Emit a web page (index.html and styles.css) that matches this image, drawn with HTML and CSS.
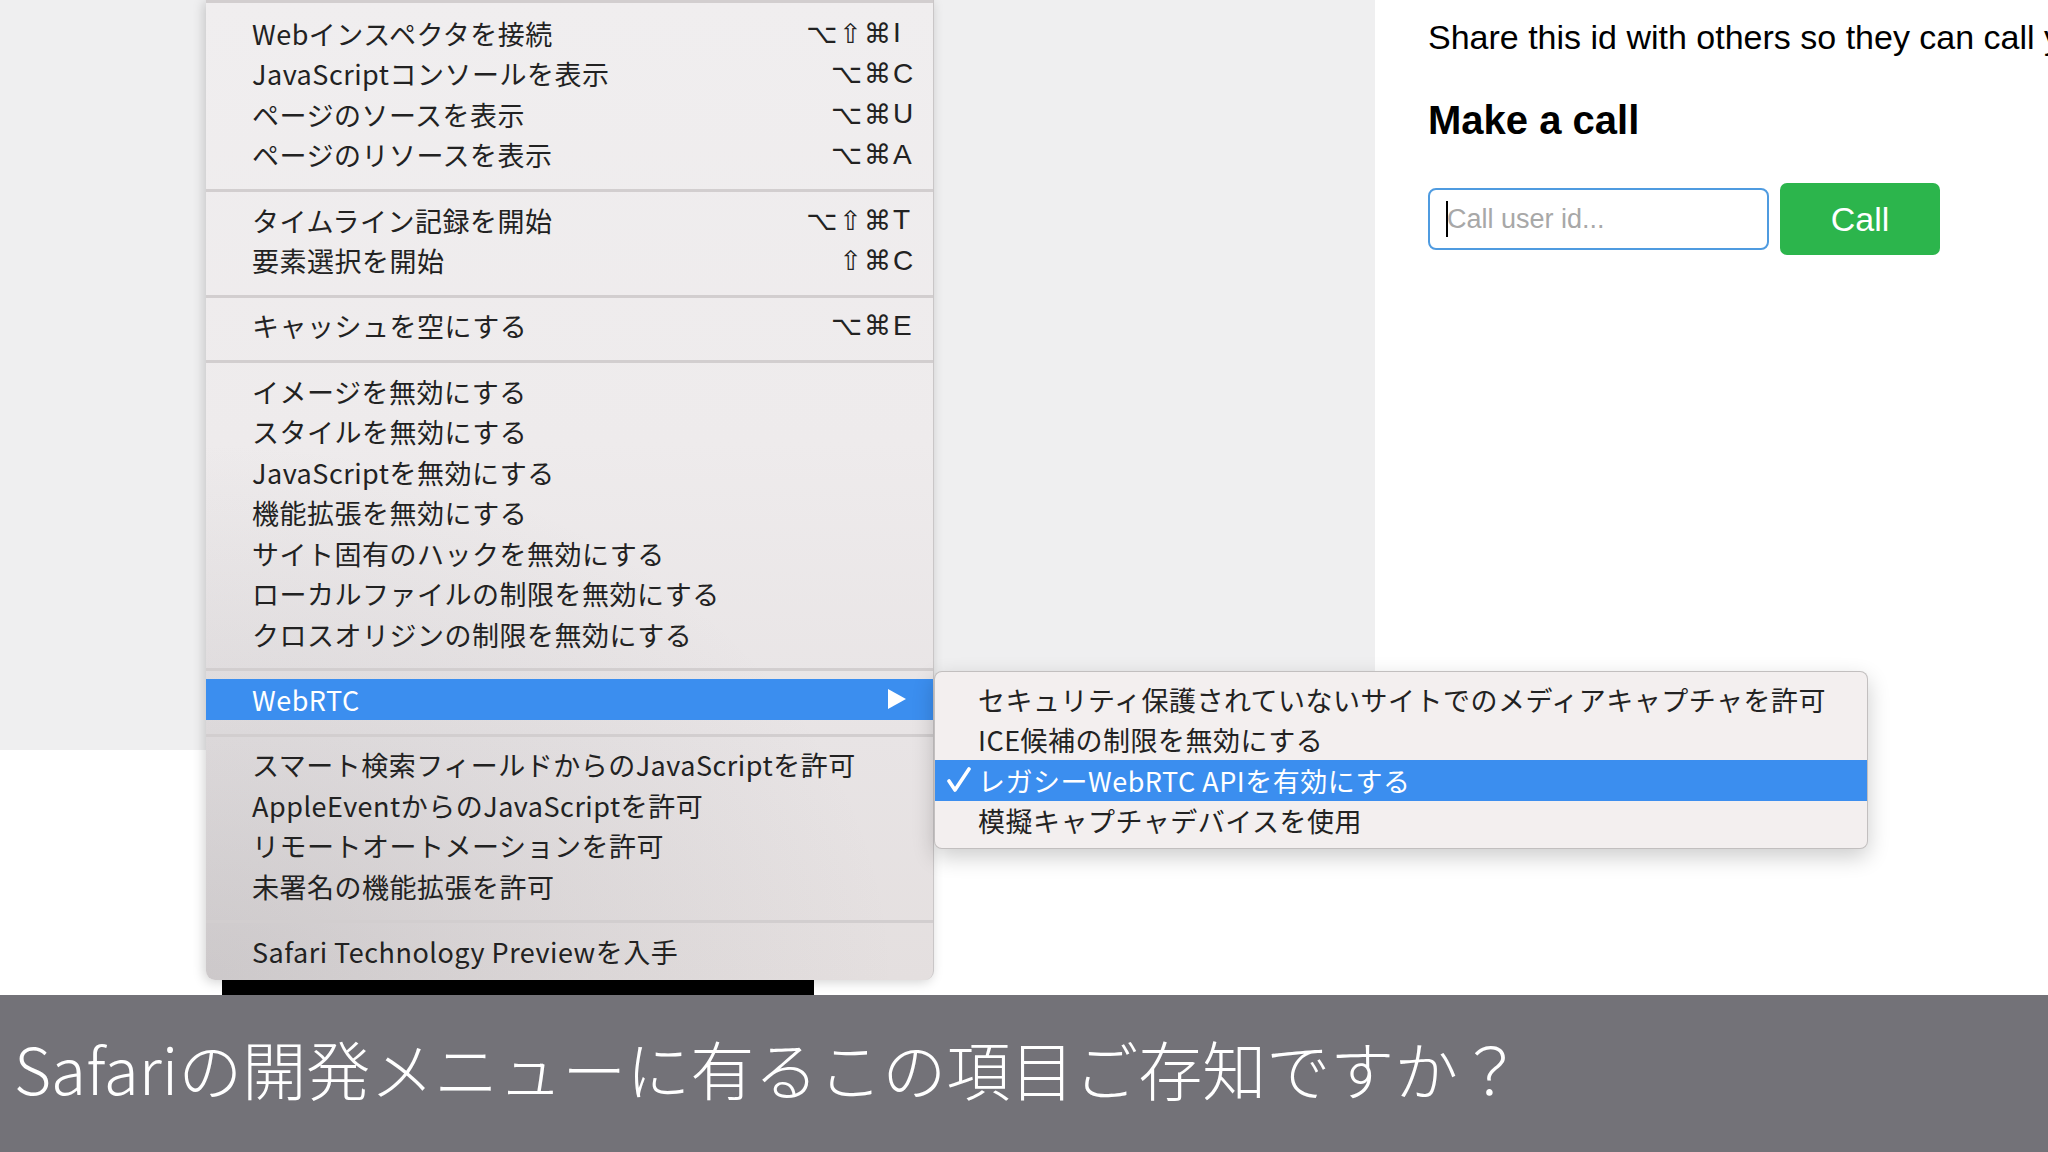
FILE: index.html
```html
<!DOCTYPE html>
<html lang="ja">
<head>
<meta charset="utf-8">
<title>Safari 開発メニュー</title>
<link rel="stylesheet" href="styles.css">
</head>
<body>
<div class="screen">
  <div class="desktop">
    <div class="left-pane"></div>
    <div class="web">
      <p class="share">Share this id with others so they can call you.</p>
      <h2 class="title">Make a call</h2>
      <div class="call-row">
        <div class="field"><span class="caret"></span><span class="ph">Call user id...</span></div>
        <button class="call-btn">Call</button>
      </div>
    </div>

    <div class="dock-bar"></div>

    <div class="menu">
      <div class="sep first"></div>
      <div class="item"><span class="label">Webインスペクタを接続</span><span class="sc"><span class="mods">⌥⇧⌘</span><span class="key">I</span></span></div>
      <div class="item"><span class="label">JavaScriptコンソールを表示</span><span class="sc"><span class="mods">⌥⌘</span><span class="key">C</span></span></div>
      <div class="item"><span class="label">ページのソースを表示</span><span class="sc"><span class="mods">⌥⌘</span><span class="key">U</span></span></div>
      <div class="item"><span class="label">ページのリソースを表示</span><span class="sc"><span class="mods">⌥⌘</span><span class="key">A</span></span></div>
      <div class="sep"></div>
      <div class="item"><span class="label">タイムライン記録を開始</span><span class="sc"><span class="mods">⌥⇧⌘</span><span class="key">T</span></span></div>
      <div class="item"><span class="label">要素選択を開始</span><span class="sc"><span class="mods">⇧⌘</span><span class="key">C</span></span></div>
      <div class="sep"></div>
      <div class="item"><span class="label">キャッシュを空にする</span><span class="sc"><span class="mods">⌥⌘</span><span class="key">E</span></span></div>
      <div class="sep"></div>
      <div class="item"><span class="label">イメージを無効にする</span></div>
      <div class="item"><span class="label">スタイルを無効にする</span></div>
      <div class="item"><span class="label">JavaScriptを無効にする</span></div>
      <div class="item"><span class="label">機能拡張を無効にする</span></div>
      <div class="item"><span class="label">サイト固有のハックを無効にする</span></div>
      <div class="item"><span class="label">ローカルファイルの制限を無効にする</span></div>
      <div class="item"><span class="label">クロスオリジンの制限を無効にする</span></div>
      <div class="sep"></div>
      <div class="item active"><span class="label">WebRTC</span>
        <svg class="arrow" width="20" height="22" viewBox="0 0 20 22"><polygon points="1,1 19,11 1,21" fill="#fff"/></svg>
      </div>
      <div class="sep"></div>
      <div class="item"><span class="label">スマート検索フィールドからのJavaScriptを許可</span></div>
      <div class="item"><span class="label">AppleEventからのJavaScriptを許可</span></div>
      <div class="item"><span class="label">リモートオートメーションを許可</span></div>
      <div class="item"><span class="label">未署名の機能拡張を許可</span></div>
      <div class="sep"></div>
      <div class="item"><span class="label">Safari Technology Previewを入手</span></div>
    </div>

    <div class="submenu">
      <div class="sub-item">セキュリティ保護されていないサイトでのメディアキャプチャを許可</div>
      <div class="sub-item">ICE候補の制限を無効にする</div>
      <div class="sub-item active">
        <svg class="check" width="26" height="26" viewBox="0 0 26 26"><path d="M3 14 L9 23 L23 2" fill="none" stroke="#fff" stroke-width="3.6" stroke-linecap="round" stroke-linejoin="round"/></svg>
        レガシーWebRTC APIを有効にする</div>
      <div class="sub-item">模擬キャプチャデバイスを使用</div>
    </div>
  </div>
  <div class="caption">Safariの開発メニューに有るこの項目ご存知ですか？</div>
</div>
</body>
</html>
```

FILE: styles.css
```css
* { box-sizing: border-box; }
html, body {
  margin: 0;
  padding: 0;
  width: 2048px;
  height: 1152px;
  overflow: hidden;
  background: #ffffff;
}
.screen {
  width: 2048px;
  height: 1152px;
  display: flex;
  flex-direction: column;
}
.desktop {
  position: relative;
  height: 995px;
  display: flex;
  flex: none;
}
.left-pane {
  width: 1375px;
  flex: none;
  background: linear-gradient(to bottom, #efeff0 0, #efeff0 750px, #ffffff 750px);
}
.web {
  flex: 1;
  overflow: hidden;
  padding: 17px 0 0 53px;
  font-family: "Liberation Sans", Arial, sans-serif;
  color: #000;
}
.share {
  margin: 0;
  font-size: 34px;
  line-height: 40px;
  white-space: nowrap;
}
.title {
  margin: 43px 0 0;
  font-size: 40px;
  line-height: 40px;
  font-weight: 700;
}
.call-row {
  margin-top: 43px;
  display: flex;
  align-items: center;
  gap: 11px;
}
.field {
  width: 341px;
  height: 62px;
  border: 2px solid #4f9be0;
  border-radius: 8px;
  display: flex;
  align-items: center;
  padding-left: 16px;
  background: #fff;
}
.caret {
  width: 2px;
  height: 36px;
  background: #000;
  margin-right: -1px;
}
.ph {
  color: #a8a8a8;
  font-size: 27px;
}
.call-btn {
  width: 160px;
  height: 72px;
  border: none;
  border-radius: 7px;
  background: #2cb54c;
  color: #fff;
  font-family: "Liberation Sans", Arial, sans-serif;
  font-size: 34px;
  padding: 0;
}
.dock-bar {
  position: absolute;
  left: 222px;
  top: 978px;
  width: 592px;
  height: 17px;
  background: #000;
}
.menu {
  position: absolute;
  left: 206px;
  top: 0;
  width: 728px;
  height: 980px;
  border-right: 1px solid #c9c6c7;
  border-radius: 0 0 9px 9px;
  background:
    radial-gradient(ellipse 95% 55% at 0% 100%, rgba(110, 110, 118, 0.2) 0%, rgba(110, 110, 118, 0.08) 55%, rgba(110, 110, 118, 0) 100%),
    linear-gradient(to bottom, #f0eeef 0%, #eeebec 45%, #e8e4e5 75%, #e4dfdf 100%);
  box-shadow: -2px 2px 12px rgba(0, 0, 0, 0.18);
  font-family: "Noto Sans CJK JP", "Noto Sans", sans-serif;
  font-size: 27px;
  letter-spacing: 0.5px;
  color: #222;
}
.sep {
  height: 3px;
  margin: 14px 0 7.75px;
  background: #d2cecf;
}
.sep.first {
  margin: 0 0 10px;
}
.item {
  height: 40.5px;
  display: flex;
  align-items: center;
  padding: 0 18px 0 46px;
  white-space: nowrap;
}
.item .label {
  flex: 1;
}
.item.active {
  background: #3b8eef;
  color: #fff;
}
.arrow {
  margin-right: 8px;
}
.sc {
  display: flex;
  align-items: center;
  letter-spacing: 0;
}
.mods {
  font-family: "DejaVu Sans", sans-serif;
  font-size: 27px;
  letter-spacing: 2px;
}
.key {
  width: 22px;
  font-family: "Liberation Sans", Arial, sans-serif;
  font-size: 28px;
}
.submenu {
  position: absolute;
  left: 934px;
  top: 671px;
  width: 934px;
  height: 178px;
  padding: 7px 0;
  border: 1px solid rgba(0, 0, 0, 0.2);
  border-radius: 8px;
  background: #f3efef;
  box-shadow: 0 8px 22px rgba(0, 0, 0, 0.2);
  font-family: "Noto Sans CJK JP", "Noto Sans", sans-serif;
  font-size: 27px;
  letter-spacing: 0.5px;
  color: #222;
}
.sub-item {
  position: relative;
  height: 40.5px;
  display: flex;
  align-items: center;
  padding-left: 43px;
  white-space: nowrap;
}
.sub-item.active {
  background: #3b8eef;
  color: #fff;
}
.check {
  position: absolute;
  left: 11px;
  top: 7px;
}
.caption {
  flex: 1;
  background: #737278;
  color: #fff;
  display: flex;
  align-items: center;
  padding: 0 0 14px 14px;
  font-family: "Noto Sans CJK JP", sans-serif;
  font-weight: 300;
  font-size: 64px;
  white-space: nowrap;
}
```
